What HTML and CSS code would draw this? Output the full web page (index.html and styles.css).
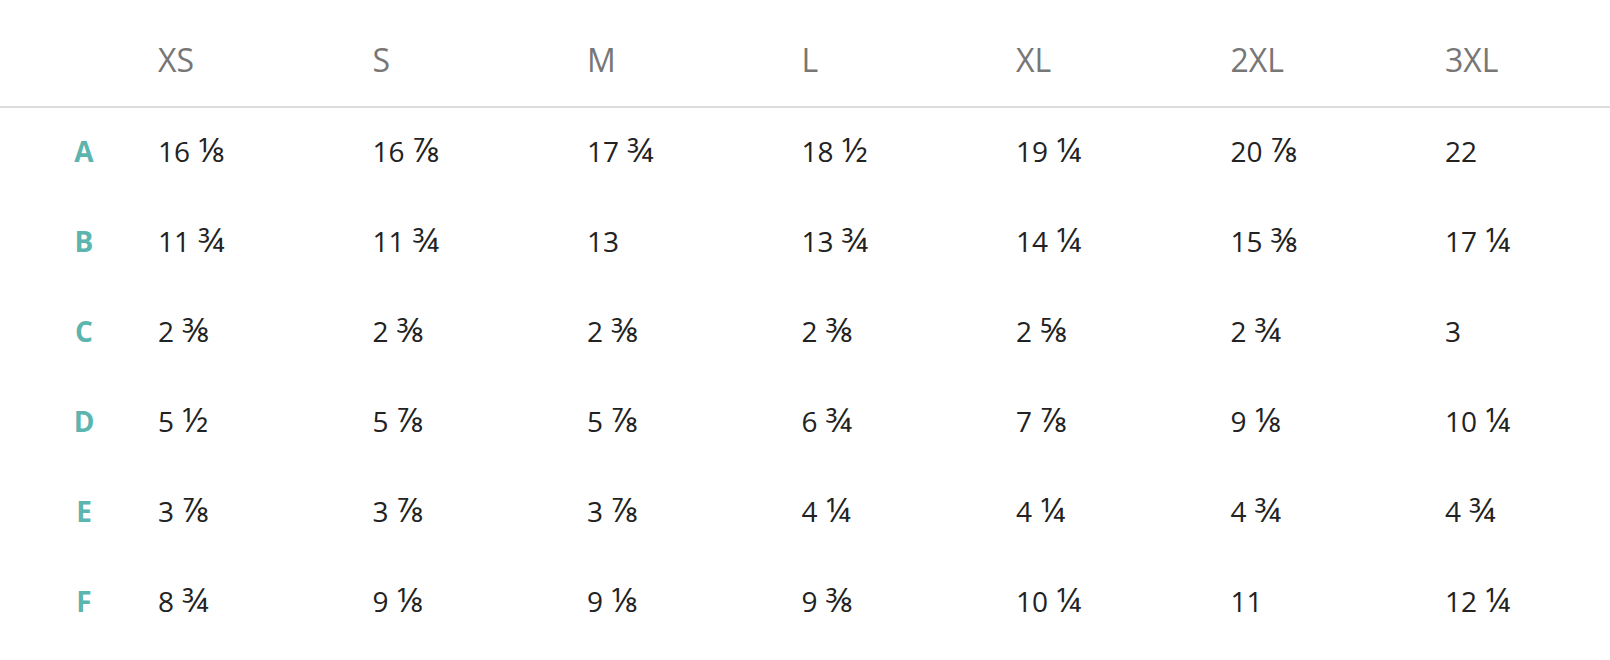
FILE: index.html
```html
<!DOCTYPE html>
<html>
<head>
<meta charset="utf-8">
<link rel="stylesheet" href="styles.css">
</head>
<body>
<div class="size-table">
  <div class="head row">
    <div class="label"></div>
    <div class="cell">XS</div>
    <div class="cell">S</div>
    <div class="cell">M</div>
    <div class="cell">L</div>
    <div class="cell">XL</div>
    <div class="cell">2XL</div>
    <div class="cell">3XL</div>
  </div>
  <div class="row body">
    <div class="label">A</div>
    <div class="cell">16 <span class="frac">⅛</span></div><div class="cell">16 <span class="frac">⅞</span></div><div class="cell">17 <span class="frac">¾</span></div><div class="cell">18 <span class="frac">½</span></div><div class="cell">19 <span class="frac">¼</span></div><div class="cell">20 <span class="frac">⅞</span></div><div class="cell">22</div>
  </div>
  <div class="row body">
    <div class="label">B</div>
    <div class="cell">11 <span class="frac">¾</span></div><div class="cell">11 <span class="frac">¾</span></div><div class="cell">13</div><div class="cell">13 <span class="frac">¾</span></div><div class="cell">14 <span class="frac">¼</span></div><div class="cell">15 <span class="frac">⅜</span></div><div class="cell">17 <span class="frac">¼</span></div>
  </div>
  <div class="row body">
    <div class="label">C</div>
    <div class="cell">2 <span class="frac">⅜</span></div><div class="cell">2 <span class="frac">⅜</span></div><div class="cell">2 <span class="frac">⅜</span></div><div class="cell">2 <span class="frac">⅜</span></div><div class="cell">2 <span class="frac">⅝</span></div><div class="cell">2 <span class="frac">¾</span></div><div class="cell">3</div>
  </div>
  <div class="row body">
    <div class="label">D</div>
    <div class="cell">5 <span class="frac">½</span></div><div class="cell">5 <span class="frac">⅞</span></div><div class="cell">5 <span class="frac">⅞</span></div><div class="cell">6 <span class="frac">¾</span></div><div class="cell">7 <span class="frac">⅞</span></div><div class="cell">9 <span class="frac">⅛</span></div><div class="cell">10 <span class="frac">¼</span></div>
  </div>
  <div class="row body">
    <div class="label">E</div>
    <div class="cell">3 <span class="frac">⅞</span></div><div class="cell">3 <span class="frac">⅞</span></div><div class="cell">3 <span class="frac">⅞</span></div><div class="cell">4 <span class="frac">¼</span></div><div class="cell">4 <span class="frac">¼</span></div><div class="cell">4 <span class="frac">¾</span></div><div class="cell">4 <span class="frac">¾</span></div>
  </div>
  <div class="row body">
    <div class="label">F</div>
    <div class="cell">8 <span class="frac">¾</span></div><div class="cell">9 <span class="frac">⅛</span></div><div class="cell">9 <span class="frac">⅛</span></div><div class="cell">9 <span class="frac">⅜</span></div><div class="cell">10 <span class="frac">¼</span></div><div class="cell">11</div><div class="cell">12 <span class="frac">¼</span></div>
  </div>
</div>
</body>
</html>
```
FILE: styles.css
```css
html, body {
  margin: 0;
  padding: 0;
  background: #fff;
}
body {
  font-family: "Open Sans", "Noto Sans", "DejaVu Sans", sans-serif;
  color: #222;
}
.size-table {
  display: flex;
  flex-direction: column;
}
.row {
  display: grid;
  grid-template-columns: 158px repeat(6, 214.5px) 1fr;
  align-items: center;
}
.head {
  height: 108px;
  border-bottom: 2px solid #dcdcdc;
  box-sizing: border-box;
  padding-top: 14px;
  font-size: 32px;
  font-weight: 500;
  color: #777;
}
.body {
  height: 90px;
  box-sizing: border-box;
  padding-bottom: 4px;
  font-size: 28px;
}
.label {
  text-align: center;
  padding-left: 10px;
  color: #5cb5ae;
  font-weight: 700;
}
.cell {
  white-space: nowrap;
  line-height: 40px;
}
.frac {
  font-size: 1.2em;
  line-height: 1;
  margin-left: 1px;
}
```
